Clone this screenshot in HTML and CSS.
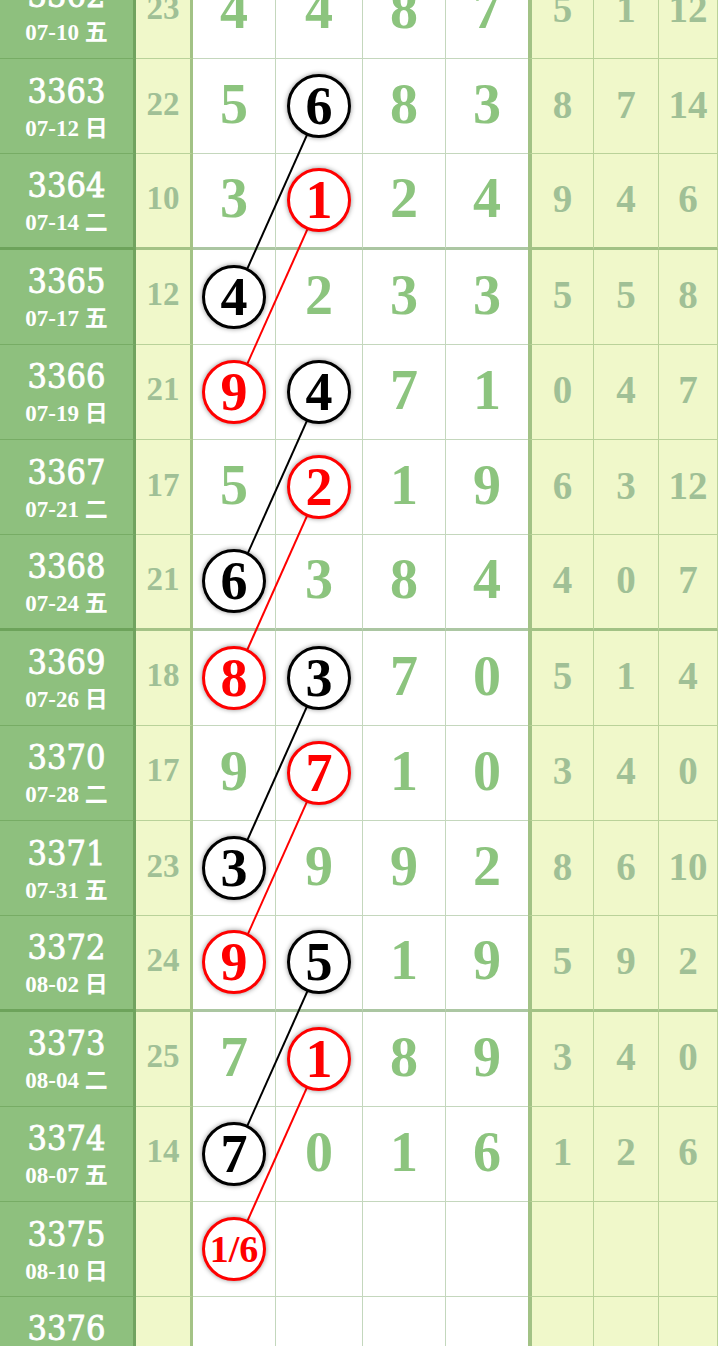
FILE: index.html
```html
<!DOCTYPE html>
<html lang="zh">
<head>
<meta charset="UTF-8">
<meta name="viewport" content="width=device-width, initial-scale=1.0">
<title>走势图</title>
<link rel="stylesheet" href="styles.css">
</head>
<body>
  <div class="chart">
    <!-- connecting lines between the circled numbers -->
    <svg class="links" width="718" height="1429" viewBox="0 0 718 1429">
      <line x1="319.5" y1="142.9" x2="234.5" y2="333.4" class="black"/>
      <line x1="319.5" y1="238.1" x2="234.5" y2="428.6" class="red"/>
      <line x1="319.5" y1="428.6" x2="234.5" y2="619.1" class="black"/>
      <line x1="319.5" y1="523.9" x2="234.5" y2="714.4" class="red"/>
      <line x1="319.5" y1="714.4" x2="234.5" y2="904.9" class="black"/>
      <line x1="319.5" y1="809.6" x2="234.5" y2="1000.1" class="red"/>
      <line x1="319.5" y1="1000.1" x2="234.5" y2="1190.6" class="black"/>
      <line x1="319.5" y1="1095.4" x2="234.5" y2="1285.9" class="red"/>
    </svg>

    <div class="row">
      <div class="cell issue"><span class="no">3362</span><span class="date">07-10 五</span></div>
      <div class="cell sum">23</div>
      <div class="cell num">4</div><div class="cell num">4</div><div class="cell num">8</div><div class="cell num last">7</div>
      <div class="cell tail first">5</div><div class="cell tail">1</div><div class="cell tail">12</div>
    </div>
    <div class="row">
      <div class="cell issue"><span class="no">3363</span><span class="date">07-12 日</span></div>
      <div class="cell sum">22</div>
      <div class="cell num">5</div><div class="cell num"><span class="ball">6</span></div><div class="cell num">8</div><div class="cell num last">3</div>
      <div class="cell tail first">8</div><div class="cell tail">7</div><div class="cell tail">14</div>
    </div>
    <div class="row end">
      <div class="cell issue"><span class="no">3364</span><span class="date">07-14 二</span></div>
      <div class="cell sum">10</div>
      <div class="cell num">3</div><div class="cell num"><span class="ball red">1</span></div><div class="cell num">2</div><div class="cell num last">4</div>
      <div class="cell tail first">9</div><div class="cell tail">4</div><div class="cell tail">6</div>
    </div>
    <div class="row">
      <div class="cell issue"><span class="no">3365</span><span class="date">07-17 五</span></div>
      <div class="cell sum">12</div>
      <div class="cell num"><span class="ball">4</span></div><div class="cell num">2</div><div class="cell num">3</div><div class="cell num last">3</div>
      <div class="cell tail first">5</div><div class="cell tail">5</div><div class="cell tail">8</div>
    </div>
    <div class="row">
      <div class="cell issue"><span class="no">3366</span><span class="date">07-19 日</span></div>
      <div class="cell sum">21</div>
      <div class="cell num"><span class="ball red">9</span></div><div class="cell num"><span class="ball">4</span></div><div class="cell num">7</div><div class="cell num last">1</div>
      <div class="cell tail first">0</div><div class="cell tail">4</div><div class="cell tail">7</div>
    </div>
    <div class="row">
      <div class="cell issue"><span class="no">3367</span><span class="date">07-21 二</span></div>
      <div class="cell sum">17</div>
      <div class="cell num">5</div><div class="cell num"><span class="ball red">2</span></div><div class="cell num">1</div><div class="cell num last">9</div>
      <div class="cell tail first">6</div><div class="cell tail">3</div><div class="cell tail">12</div>
    </div>
    <div class="row end">
      <div class="cell issue"><span class="no">3368</span><span class="date">07-24 五</span></div>
      <div class="cell sum">21</div>
      <div class="cell num"><span class="ball">6</span></div><div class="cell num">3</div><div class="cell num">8</div><div class="cell num last">4</div>
      <div class="cell tail first">4</div><div class="cell tail">0</div><div class="cell tail">7</div>
    </div>
    <div class="row">
      <div class="cell issue"><span class="no">3369</span><span class="date">07-26 日</span></div>
      <div class="cell sum">18</div>
      <div class="cell num"><span class="ball red">8</span></div><div class="cell num"><span class="ball">3</span></div><div class="cell num">7</div><div class="cell num last">0</div>
      <div class="cell tail first">5</div><div class="cell tail">1</div><div class="cell tail">4</div>
    </div>
    <div class="row">
      <div class="cell issue"><span class="no">3370</span><span class="date">07-28 二</span></div>
      <div class="cell sum">17</div>
      <div class="cell num">9</div><div class="cell num"><span class="ball red">7</span></div><div class="cell num">1</div><div class="cell num last">0</div>
      <div class="cell tail first">3</div><div class="cell tail">4</div><div class="cell tail">0</div>
    </div>
    <div class="row">
      <div class="cell issue"><span class="no">3371</span><span class="date">07-31 五</span></div>
      <div class="cell sum">23</div>
      <div class="cell num"><span class="ball">3</span></div><div class="cell num">9</div><div class="cell num">9</div><div class="cell num last">2</div>
      <div class="cell tail first">8</div><div class="cell tail">6</div><div class="cell tail">10</div>
    </div>
    <div class="row end">
      <div class="cell issue"><span class="no">3372</span><span class="date">08-02 日</span></div>
      <div class="cell sum">24</div>
      <div class="cell num"><span class="ball red">9</span></div><div class="cell num"><span class="ball">5</span></div><div class="cell num">1</div><div class="cell num last">9</div>
      <div class="cell tail first">5</div><div class="cell tail">9</div><div class="cell tail">2</div>
    </div>
    <div class="row">
      <div class="cell issue"><span class="no">3373</span><span class="date">08-04 二</span></div>
      <div class="cell sum">25</div>
      <div class="cell num">7</div><div class="cell num"><span class="ball red">1</span></div><div class="cell num">8</div><div class="cell num last">9</div>
      <div class="cell tail first">3</div><div class="cell tail">4</div><div class="cell tail">0</div>
    </div>
    <div class="row">
      <div class="cell issue"><span class="no">3374</span><span class="date">08-07 五</span></div>
      <div class="cell sum">14</div>
      <div class="cell num"><span class="ball">7</span></div><div class="cell num">0</div><div class="cell num">1</div><div class="cell num last">6</div>
      <div class="cell tail first">1</div><div class="cell tail">2</div><div class="cell tail">6</div>
    </div>
    <div class="row">
      <div class="cell issue"><span class="no">3375</span><span class="date">08-10 日</span></div>
      <div class="cell sum"></div>
      <div class="cell num"><span class="ball red small">1/6</span></div><div class="cell num"></div><div class="cell num"></div><div class="cell num last"></div>
      <div class="cell tail first"></div><div class="cell tail"></div><div class="cell tail"></div>
    </div>
    <div class="row end">
      <div class="cell issue"><span class="no">3376</span><span class="date">08-12 二</span></div>
      <div class="cell sum"></div>
      <div class="cell num"></div><div class="cell num"></div><div class="cell num"></div><div class="cell num last"></div>
      <div class="cell tail first"></div><div class="cell tail"></div><div class="cell tail"></div>
    </div>
  </div>
</body>
</html>
```
FILE: styles.css
```css
body {
  margin: 0;
  background-color: #ffffff;
  overflow: hidden;
}
.chart {
  position: relative;
  width: 718px;
  margin-top: -36.25px;
  font-family: "Liberation Serif", "Noto Sans CJK SC", serif;
  font-weight: bold;
}
.links {
  position: absolute;
  top: 0;
  left: 0;
  z-index: 1;
}
.links line {
  stroke-width: 2;
}
.links .black {
  stroke: #000000;
}
.links .red {
  stroke: #ff0000;
}
.row {
  display: grid;
  grid-template-columns: 136px 57px 83px 87px 83px 82px 66px 65px 59px;
  height: 95.25px;
}
.cell {
  box-sizing: border-box;
  display: flex;
  align-items: center;
  justify-content: center;
  border-right: 1px solid rgba(70, 130, 50, 0.32);
  border-bottom: 1px solid rgba(70, 130, 50, 0.32);
  padding-bottom: 4px;
}
.row.end .cell {
  border-bottom: 3px solid rgba(70, 130, 50, 0.45);
}
.issue {
  flex-direction: column;
  background-color: #8ec07e;
  color: #ffffff;
  border-right: 3px solid rgba(60, 110, 40, 0.35);
  padding-bottom: 0;
}
.issue .no {
  font-family: "DejaVu Serif Condensed", "DejaVu Serif", serif;
  font-stretch: condensed;
  font-size: 34px;
  font-weight: normal;
  line-height: 38px;
  -webkit-text-stroke: 0.8px #ffffff;
}
.issue .date {
  font-size: 23px;
  line-height: 24px;
  margin-top: 7px;
}
.sum {
  background-color: #f0f8ca;
  color: #a0c096;
  font-size: 33px;
  border-right: 3px solid rgba(70, 130, 50, 0.45);
}
.num {
  background-color: #ffffff;
  color: #8cc47e;
  font-size: 56px;
}
.num.last {
  border-right: none;
}
.tail {
  background-color: #f0f8ca;
  color: #a0c096;
  font-size: 39px;
}
.tail.first {
  border-left: 4px solid rgba(70, 130, 50, 0.45);
}
.ball {
  position: relative;
  z-index: 2;
  box-sizing: border-box;
  width: 64px;
  height: 64px;
  margin-top: 4px;
  display: flex;
  align-items: center;
  justify-content: center;
  border: 3px solid #000000;
  border-radius: 50%;
  background-color: #ffffff;
  color: #000000;
  font-size: 54px;
  box-shadow: 0 0 5px rgba(0, 0, 0, 0.45);
}
.ball.red {
  border-color: #ff0000;
  color: #ff0000;
}
.ball.small {
  font-size: 38px;
}
```
